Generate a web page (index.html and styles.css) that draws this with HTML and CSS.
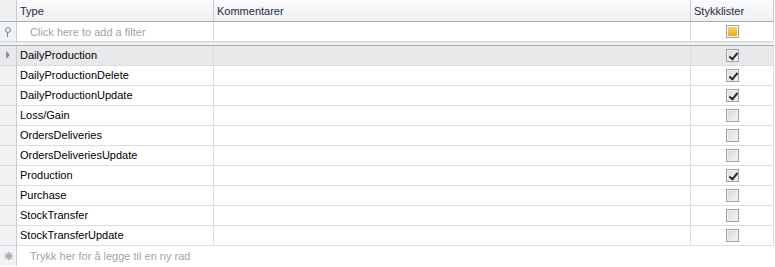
FILE: index.html
```html
<!DOCTYPE html>
<html lang="en">
<head>
    <meta charset="UTF-8">
    <title>Typer</title>
    <link rel="stylesheet" href="styles.css">
</head>
<body>
    <div class="grid">
        <div class="row header">
            <div class="cell ind"></div>
            <div class="cell">Type</div>
            <div class="cell">Kommentarer</div>
            <div class="cell">Stykklister</div>
        </div>
        <div class="row filter">
            <div class="cell ind"><span class="pin"></span></div>
            <div class="cell hint">Click here to add a filter</div>
            <div class="cell"></div>
            <div class="cell center"><span class="box partial"></span></div>
        </div>
        <div class="spacer"></div>
        <div id="rows"></div>
        <div class="row newrow">
            <div class="cell ind"><span class="star">&#x274B;</span></div>
            <div class="cell hint wide">Trykk her for å legge til en ny rad</div>
        </div>
    </div>

    <script>
        const types = [
            { name: "DailyProduction", stk: true },
            { name: "DailyProductionDelete", stk: true },
            { name: "DailyProductionUpdate", stk: true },
            { name: "Loss/Gain", stk: false },
            { name: "OrdersDeliveries", stk: false },
            { name: "OrdersDeliveriesUpdate", stk: false },
            { name: "Production", stk: true },
            { name: "Purchase", stk: false },
            { name: "StockTransfer", stk: false },
            { name: "StockTransferUpdate", stk: false }
        ];

        const rows = document.getElementById("rows");
        types.forEach((t, i) => {
            const row = document.createElement("div");
            row.className = "row data" + (i === 0 ? " focused" : "");
            row.innerHTML =
                '<div class="cell ind">' + (i === 0 ? '<span class="arrow"></span>' : '') + '</div>' +
                '<div class="cell">' + t.name + '</div>' +
                '<div class="cell"></div>' +
                '<div class="cell center"><span class="box' + (t.stk ? ' checked' : '') + '"></span></div>';
            rows.appendChild(row);
        });
    </script>
</body>
</html>
```

FILE: styles.css
```css
body {
    margin: 0;
    background: #fff;
    font-family: 'Liberation Sans', Arial, sans-serif;
    font-size: 11px;
    color: #000;
}
.grid {
    width: 774px;
}
.row {
    display: grid;
    grid-template-columns: 17px 197px 477px 83px;
}
.cell {
    box-sizing: border-box;
    border-right: 1px solid #dadcdf;
    border-bottom: 1px solid #dadcdf;
    padding-left: 3px;
    display: flex;
    align-items: center;
    white-space: nowrap;
    overflow: hidden;
}
.center {
    justify-content: center;
    padding-left: 0;
}
.ind {
    background: #f1f2f4;
    border-right-color: #c9cdd3;
    padding-left: 0;
    justify-content: center;
}
.header .cell {
    height: 22px;
    background: linear-gradient(#fbfbfc, #eef0f3);
    border-right-color: #c6cad1;
    border-bottom-color: #a7adb6;
    color: #1e2a3a;
}
.header .cell.ind {
    background: #eff0f2;
}
.filter .cell {
    height: 20px;
}
.hint {
    color: #a3a3a3;
    padding-left: 13px;
}
.spacer {
    background: #f3f4f5;
    border-top: 1px solid #e2e4e7;
    border-bottom: 1px solid #a7adb6;
    height: 2px;
}
.data .cell {
    height: 20px;
    padding-bottom: 1px;
}
.focused .cell {
    background: #e8e9eb;
}
.focused .cell.ind {
    background: #e6e8eb;
}
.newrow {
    grid-template-columns: 17px 757px;
}
.newrow .cell {
    height: 20px;
    border-bottom: none;
    border-right: none;
}
.newrow .cell.ind {
    border-right: 1px solid #c9cdd3;
}
.arrow {
    width: 0;
    height: 0;
    border-top: 4px solid transparent;
    border-bottom: 4px solid transparent;
    border-left: 4px solid #8a9099;
}
.pin {
    position: relative;
    width: 4px;
    height: 4px;
    border: 1px solid #7d838c;
    border-radius: 50%;
    margin-top: -4px;
}
.pin::after {
    content: "";
    position: absolute;
    left: 1px;
    top: 5px;
    width: 1px;
    height: 4px;
    background: #7d838c;
}
.star {
    color: #9aa0a8;
    font-size: 11px;
}
.box {
    position: relative;
    box-sizing: border-box;
    width: 13px;
    height: 13px;
    border: 1px solid #9ca2ab;
    background: linear-gradient(135deg, #dadada, #f4f4f4);
    box-shadow: inset 0 0 0 1px #f0f0f0;
}
.box.partial {
    background: linear-gradient(#fcd86a, #f2a510);
    box-shadow: inset 0 0 0 1px #ffffff;
}
.box.checked::after {
    content: "";
    position: absolute;
    left: 4px;
    top: 1px;
    width: 3px;
    height: 7px;
    border-right: 2px solid #2b2b2b;
    border-bottom: 2px solid #2b2b2b;
    transform: rotate(40deg);
}
```
